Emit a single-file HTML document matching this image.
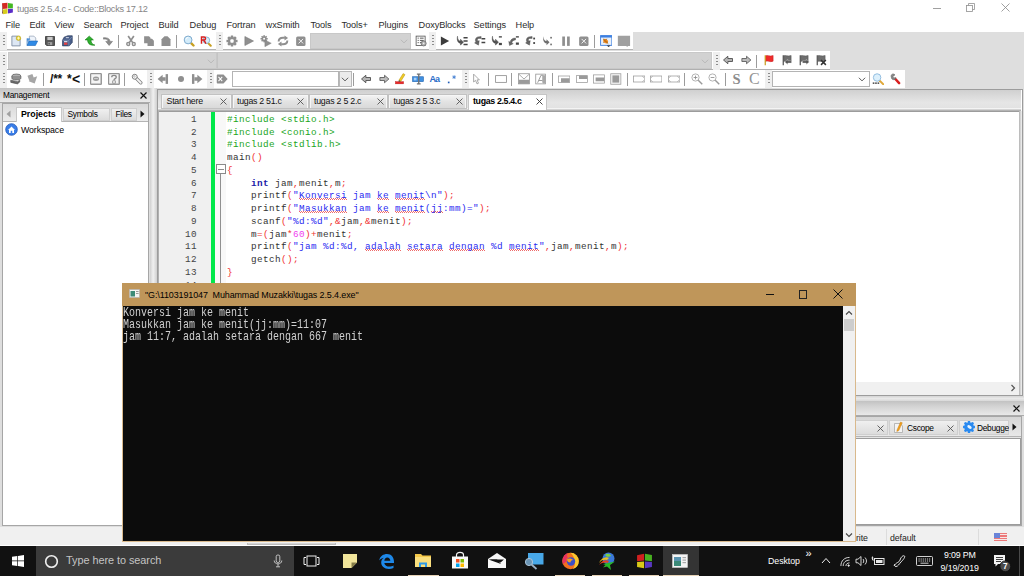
<!DOCTYPE html>
<html><head><meta charset="utf-8"><title>tugas 2.5.4.c - Code::Blocks 17.12</title>
<style>
*{box-sizing:border-box;margin:0;padding:0}
html,body{width:1024px;height:576px;overflow:hidden;background:#dedede;font-family:"Liberation Sans",sans-serif;font-size:9px;color:#000}
.a{position:absolute}
.t{position:absolute;white-space:nowrap;line-height:1}
#title{left:0;top:0;width:1024px;height:16px;background:#fff}
#menu{left:0;top:16px;width:1024px;height:16px;background:#fff}
#menu span{position:absolute;top:5px;font-size:9.2px;color:#2c2c2c;white-space:nowrap;line-height:1;letter-spacing:-0.1px}
.tb{position:absolute;background:#fff}
.gripbg{position:absolute;width:7px;height:18px;background:#efefef}
.grip{position:absolute;width:1.5px;height:12px;background:repeating-linear-gradient(#8c8c8c 0 1px,transparent 1px 3px)}
.sep{position:absolute;width:1px;height:13px;background:#9c9c9c}
.dcombo{position:absolute;background:#d2d2d2;border:1px solid #c8c8c8}
.combo{position:absolute;background:#fff;border:1px solid #b4b4b4}
.cbtn{position:absolute;background:#ececec;border:1px solid #b8b8b8}
.hdr{background:linear-gradient(#c2c2c2,#d4d4d4 40%,#e9e9e9)}
.tab{position:absolute;top:95px;height:13px;background:linear-gradient(#f2f2f2,#e2e2e2 50%,#d9d9d9);border:1px solid #f6f6f6;border-bottom:none;outline:1px solid #c2c2c2;font-size:8.8px;line-height:11px;white-space:nowrap;color:#111;letter-spacing:-0.32px}
.tab i{position:absolute;right:3px;top:2px;width:7px;height:7px}
.x7{position:absolute;width:7px;height:7px}
#code{left:227px;top:113.8px;font-family:"Liberation Mono",monospace;font-size:9.3px;letter-spacing:0.42px;line-height:12.75px;white-space:pre;color:#333}
#code .p{color:#1aa51a}
#code .k{color:#1a1aa8;font-weight:bold}
#code .o{color:#f03030}
#code .s{color:#2a2af0}
#code .n{color:#f040f0}
#code .w{background:repeating-linear-gradient(90deg,#ee6a6a 0 1px,transparent 1px 2px) 0 8px/100% 1px no-repeat,repeating-linear-gradient(90deg,transparent 0 1px,#ee6a6a 1px 2px) 0 9px/100% 1px no-repeat}
#ln{left:159px;top:113.8px;width:38px;text-align:right;font-family:"Liberation Mono",monospace;font-size:9.3px;letter-spacing:0.42px;line-height:12.75px;white-space:pre;color:#444}
#con{left:122px;top:283px;width:734px;height:259px;background:linear-gradient(#bf965a 0 23px,#d9b98c 23px)}
#conb{left:1px;top:23px;width:720px;height:235px;background:#0c0c0c;overflow:hidden}
#cont{left:0;top:1px;font-family:"Liberation Mono",monospace;font-size:10px;line-height:9.23px;color:#d0d0d0;white-space:pre;transform-origin:0 0;transform:scaleY(1.3);will-change:transform}
#task{left:0;top:546px;width:1024px;height:30px;background:#111}
.ul{position:absolute;top:28.5px;height:1.5px;background:#e8d4b8}
</style></head><body>
<div id="title" class="a">
<svg class="a" style="left:1px;top:1.5px" width="13" height="13" viewBox="0 0 16 16"><path d="M1.2 1.5L8 1V8L2 8.6Z" fill="#d42a22"/><path d="M1.2 1.5L2 8.6L2.6 14.6L1.6 14Z" fill="#5a1a14"/><path d="M8.6 1.2L14.6 2V7.6L8.6 8Z" fill="#44b822"/><path d="M2 9.2L8 8.6V14.2L2.6 15.2Z" fill="#d6cc1e"/><path d="M8.6 8.6L14.6 8.2V13L8.6 14Z" fill="#5a2cc8"/></svg>
<div class="t" style="left:17px;top:5px;font-size:9.2px;color:#868686;letter-spacing:-0.29px">tugas 2.5.4.c - Code::Blocks 17.12</div>
<div class="a" style="left:933px;top:8px;width:8px;height:1px;background:#a0a0a0"></div>
<svg class="a" style="left:966px;top:3px" width="9" height="9" viewBox="0 0 9 9" fill="none" stroke="#909090" stroke-width="0.8"><rect x="0.5" y="2.5" width="6" height="6"/><path d="M2.5 2.5V0.5H8.5V6.5H6.5"/></svg>
<svg class="a" style="left:1001px;top:3px" width="9" height="9" viewBox="0 0 9 9" stroke="#888" stroke-width="0.8"><path d="M0.5 0.5L8.5 8.5M8.5 0.5L0.5 8.5"/></svg>
</div>
<div id="menu" class="a">
<span style="left:5.6px">File</span>
<span style="left:29.6px">Edit</span>
<span style="left:54.6px">View</span>
<span style="left:83.6px">Search</span>
<span style="left:120.6px">Project</span>
<span style="left:158.6px">Build</span>
<span style="left:189.6px">Debug</span>
<span style="left:226.6px">Fortran</span>
<span style="left:265.6px">wxSmith</span>
<span style="left:310.6px">Tools</span>
<span style="left:341.6px">Tools+</span>
<span style="left:378.6px">Plugins</span>
<span style="left:418.6px">DoxyBlocks</span>
<span style="left:473.6px">Settings</span>
<span style="left:515.6px">Help</span>
</div>
<div class="a" style="left:0;top:32px;width:633px;height:18px;background:#fff;border-bottom:1px solid #b4b4b4"></div>
<div class="a" style="left:0;top:51px;width:830px;height:19px;background:#fff;border-bottom:1px solid #b0b0b0"></div>
<div class="a" style="left:0;top:70px;width:905px;height:18px;background:#fff;"></div>
<div class="gripbg" style="left:0px;top:32px"></div><div class="grip" style="left:3px;top:35px"></div>
<div class="gripbg" style="left:216px;top:32px"></div><div class="grip" style="left:219px;top:35px"></div>
<div class="gripbg" style="left:429px;top:32px"></div><div class="grip" style="left:432px;top:35px"></div>
<div class="gripbg" style="left:0px;top:52px"></div><div class="grip" style="left:3px;top:55px"></div>
<div class="gripbg" style="left:713px;top:52px"></div><div class="grip" style="left:716px;top:55px"></div>
<div class="gripbg" style="left:0px;top:70px"></div><div class="grip" style="left:3px;top:73px"></div>
<div class="gripbg" style="left:147px;top:70px"></div><div class="grip" style="left:150px;top:73px"></div>
<div class="gripbg" style="left:207px;top:70px"></div><div class="grip" style="left:210px;top:73px"></div>
<div class="gripbg" style="left:462px;top:70px"></div><div class="grip" style="left:465px;top:73px"></div>
<div class="gripbg" style="left:765px;top:70px"></div><div class="grip" style="left:768px;top:73px"></div>
<svg class="a" style="left:10px;top:35px" width="12" height="12" viewBox="0 0 16 16"><path d="M2.5 1.5H10L13.5 5V14.5H2.5Z" fill="#dde7f4" stroke="#76859c" stroke-width="1.1"/><circle cx="11.3" cy="4.2" r="3" fill="#ecd93a" stroke="#b49a10" stroke-width="0.8"/><path d="M11.3 2.4V6M9.5 4.2H13.1" stroke="#fffbd0" stroke-width="1.1"/></svg>
<svg class="a" style="left:26px;top:35px" width="12" height="12" viewBox="0 0 16 16"><path d="M4.5 1.5H10.5L13 4V9H4.5Z" fill="#eef3fa" stroke="#8a9ab0" stroke-width="0.9"/><path d="M1.5 4.5H5L6 6H3.5V13Z" fill="#2a7fd8"/><path d="M1.5 14L4.5 8H15.5L12.5 14Z" fill="#2f8ae6" stroke="#1a64b8" stroke-width="0.8"/><path d="M1.5 4.5V14" stroke="#1a64b8" stroke-width="1"/></svg>
<svg class="a" style="left:44px;top:35px" width="12" height="12" viewBox="0 0 16 16"><path d="M2 2H14V14H3.5L2 12.5Z" fill="#585858" stroke="#2e2e2e" stroke-width="1"/><rect x="4.5" y="2.5" width="7" height="4.2" fill="#c8c8c8"/><rect x="5" y="9.5" width="6" height="4" fill="#a0a0a0"/><rect x="6" y="10.5" width="1.6" height="2.2" fill="#444"/></svg>
<svg class="a" style="left:61px;top:35px" width="12" height="12" viewBox="0 0 16 16"><path d="M4 3L9 1H15V10L11 14.5H2V7Z" fill="#4a5f8a" stroke="#2d3c5e" stroke-width="0.9"/><path d="M2 7H10.5V14.5M10.5 7L15 2.5" stroke="#8fa3c8" stroke-width="0.8" fill="none"/><rect x="4" y="10" width="4.5" height="3" fill="#e84040"/><rect x="4" y="8" width="4.5" height="1.6" fill="#d8dce8"/><rect x="6.5" y="3" width="4" height="1.2" fill="#dfe4f0"/></svg>
<svg class="a" style="left:84px;top:35px" width="12" height="12" viewBox="0 0 16 16"><path d="M7 1.5L1.5 6.5H4.8C4.8 10.5 7 13.5 12 13.5H14.5C11 12.5 9.3 10.5 9.3 6.5H12.5Z" fill="#2fb02f" stroke="#148014" stroke-width="0.9" stroke-linejoin="round"/></svg>
<svg class="a" style="left:102px;top:35px" width="12" height="12" viewBox="0 0 16 16"><path d="M2 3.5C8 3.5 10.5 5 10.5 8.5H14L9.5 14L5 8.5H8C8 6 6 5 2 5.5Z" fill="#8a8a8a" stroke="#6a6a6a" stroke-width="0.7" stroke-linejoin="round"/></svg>
<svg class="a" style="left:125px;top:35px" width="12" height="12" viewBox="0 0 16 16"><path d="M4.2 1.2L10.5 10.5M11.8 1.2L5.5 10.5" stroke="#8f8f8f" stroke-width="2.3" fill="none"/><circle cx="4.3" cy="12" r="2" fill="none" stroke="#8f8f8f" stroke-width="1.8"/><circle cx="11.7" cy="12" r="2" fill="none" stroke="#8f8f8f" stroke-width="1.8"/></svg>
<svg class="a" style="left:143px;top:35px" width="12" height="12" viewBox="0 0 16 16"><path d="M1.5 1.5H8L10 3.5V5H12L14.5 7.5V14.5H6V11H1.5Z" fill="#8f8f8f"/></svg>
<svg class="a" style="left:160px;top:35px" width="12" height="12" viewBox="0 0 16 16"><path d="M2 14.5V5.5L6 1.5H10L14 5.5V14.5Z" fill="#8f8f8f"/></svg>
<svg class="a" style="left:183px;top:35px" width="12" height="12" viewBox="0 0 16 16"><path d="M10.5 10.5L14 14" stroke="#c8a020" stroke-width="3.2" stroke-linecap="round"/><circle cx="6.8" cy="6.6" r="5.2" fill="#d4ecfa" stroke="#7aa8cc" stroke-width="1.3"/><path d="M3.8 6A3.2 3.2 0 0 1 7 3.2" stroke="#fff" stroke-width="1.2" fill="none"/></svg>
<svg class="a" style="left:200px;top:35px" width="12" height="12" viewBox="0 0 16 16"><path d="M10.5 10.5L14.3 14.3" stroke="#c8a020" stroke-width="2.8" stroke-linecap="round"/><circle cx="8.5" cy="7" r="4.4" fill="#d8eefa" stroke="#7fb0d0" stroke-width="1.2"/><path d="M2 11.5V2.5H5.5C8 2.5 8 6.5 5.5 6.5H2M5 6.5L8 11.5" stroke="#d82020" stroke-width="2" fill="none"/></svg>
<svg class="a" style="left:226px;top:35px" width="12" height="12" viewBox="0 0 16 16"><g fill="#8f8f8f"><circle cx="8" cy="8" r="5.4"/><rect x="6.2" y="0.6" width="3.6" height="14.8" rx="0.6"/><rect x="0.6" y="6.2" width="14.8" height="3.6" rx="0.6"/><rect x="6.2" y="0.6" width="3.6" height="14.8" rx="0.6" transform="rotate(45 8 8)"/><rect x="6.2" y="0.6" width="3.6" height="14.8" rx="0.6" transform="rotate(-45 8 8)"/></g><rect x="5.8" y="5.8" width="4.4" height="4.4" rx="1.2" fill="#fff"/></svg>
<svg class="a" style="left:243px;top:35px" width="12" height="12" viewBox="0 0 16 16"><path d="M2.5 2L14 8L2.5 14Z" fill="#8f8f8f" stroke="#7a7a7a" stroke-width="0.8"/></svg>
<svg class="a" style="left:260px;top:35px" width="12" height="12" viewBox="0 0 16 16"><g fill="#8f8f8f"><circle cx="5.5" cy="5" r="3.4"/><rect x="4.5" y="0.2" width="2" height="9.6"/><rect x="0.7" y="4" width="9.6" height="2"/><rect x="4.5" y="0.2" width="2" height="9.6" transform="rotate(45 5.5 5)"/><rect x="4.5" y="0.2" width="2" height="9.6" transform="rotate(-45 5.5 5)"/></g><circle cx="5.5" cy="5" r="1.3" fill="#fff"/><path d="M6.5 6.5L15 11L6.5 15.5Z" fill="#8f8f8f" stroke="#808080" stroke-width="0.6"/></svg>
<svg class="a" style="left:277px;top:35px" width="12" height="12" viewBox="0 0 16 16"><path d="M2.2 8.6C2.2 5 4.5 3.6 8 3.6H10.5" fill="none" stroke="#8f8f8f" stroke-width="2.6"/><path d="M10 0.8L14.8 4L10 7.2Z" fill="#8f8f8f"/><path d="M13.8 7.4C13.8 11 11.5 12.4 8 12.4H5.5" fill="none" stroke="#8f8f8f" stroke-width="2.6"/><path d="M6 8.8L1.2 12L6 15.2Z" fill="#8f8f8f"/></svg>
<svg class="a" style="left:295px;top:35px" width="12" height="12" viewBox="0 0 16 16"><rect x="1.5" y="2" width="12.5" height="12.5" rx="2" fill="#8f8f8f"/><path d="M4.8 5.2L10.8 11.2M10.8 5.2L4.8 11.2" stroke="#f4f4f4" stroke-width="1.3"/></svg>
<svg class="a" style="left:415px;top:35px" width="12" height="12" viewBox="0 0 16 16"><rect x="1.5" y="1.5" width="12" height="12.5" fill="#fff" stroke="#555" stroke-width="1.1"/><path d="M3.5 4.2H5M6.5 4.2H11.5M3.5 7.2H5M6.5 7.2H11.5M3.5 10.2H5M6.5 10.2H9" stroke="#444" stroke-width="1.2"/><circle cx="11.5" cy="11.2" r="3.4" fill="#b0b0b0" stroke="#6a6a6a" stroke-width="1"/><circle cx="11.5" cy="11.2" r="1.1" fill="#f0f0f0"/></svg>
<svg class="a" style="left:439px;top:35px" width="12" height="12" viewBox="0 0 16 16"><path d="M2.5 2L13.5 8L2.5 14Z" fill="#3c3c3c"/></svg>
<svg class="a" style="left:456px;top:35px" width="12" height="12" viewBox="0 0 16 16"><path d="M2 1.5C2 6 3.5 7.5 6 8V5.5L10 9.5L6 13.5V11C2.5 10.5 0.8 7 2 1.5Z" fill="#555" stroke="#333" stroke-width="0.5"/><path d="M10 3.5H15.5M10 8H15.5M10 12.5H15.5" stroke="#444" stroke-width="2"/></svg>
<svg class="a" style="left:474px;top:35px" width="12" height="12" viewBox="0 0 16 16"><path d="M9.5 2L5 2.5C2 3.5 1 6.5 2.5 9L0.8 10.5L6 13.5L7 7.5L5 8C4 6.5 4.5 5 6 4.5L9.5 4.5Z" fill="#666" stroke="#444" stroke-width="0.5"/><path d="M10 5H15M10 10H15" stroke="#444" stroke-width="2"/></svg>
<svg class="a" style="left:491px;top:35px" width="12" height="12" viewBox="0 0 16 16"><path d="M2 1.5C2 6 3.5 7.5 6 8V5.5L10 9.5L6 13.5V11C2.5 10.5 0.8 7 2 1.5Z" fill="#555" stroke="#333" stroke-width="0.5"/><path d="M10.5 2.5H14.5" stroke="#444" stroke-width="1.8"/><rect x="10.5" y="10.5" width="4" height="3" fill="#444"/></svg>
<svg class="a" style="left:508px;top:35px" width="12" height="12" viewBox="0 0 16 16"><path d="M10 4C6 4 3.5 6 2.8 9.5L1 8.5L2 14L7 11.5L5 10.5C5.5 8 7 6.8 10 6.5Z" fill="#666" stroke="#444" stroke-width="0.5"/><path d="M10.5 2.5H14.5" stroke="#444" stroke-width="1.8"/><rect x="10.5" y="10" width="4" height="3" fill="#444"/></svg>
<svg class="a" style="left:525px;top:35px" width="12" height="12" viewBox="0 0 16 16"><path d="M9.5 2L5 2.5C2 3.5 1 6.5 2.5 9L0.8 10.5L6 13.5L7 7.5L5 8C4 6.5 4.5 5 6 4.5L9.5 4.5Z" fill="#666" stroke="#444" stroke-width="0.5"/><rect x="11" y="3.5" width="2.4" height="2.4" fill="#444"/><rect x="11" y="9.5" width="2.4" height="2.4" fill="#444"/></svg>
<svg class="a" style="left:542px;top:35px" width="12" height="12" viewBox="0 0 16 16"><path d="M2 1.5C2 6 3.5 7.5 6 8V5.5L10 9.5L6 13.5V11C2.5 10.5 0.8 7 2 1.5Z" fill="#707070"/><rect x="11" y="2.5" width="2.2" height="2.2" fill="#707070"/><rect x="11" y="11.5" width="2.2" height="2.2" fill="#707070"/></svg>
<svg class="a" style="left:560px;top:35px" width="12" height="12" viewBox="0 0 16 16"><rect x="3" y="2" width="3.6" height="12.5" fill="#8f8f8f"/><rect x="9.4" y="2" width="3.6" height="12.5" fill="#8f8f8f"/></svg>
<svg class="a" style="left:578px;top:35px" width="12" height="12" viewBox="0 0 16 16"><rect x="1.5" y="2" width="12.5" height="12.5" rx="2" fill="#8f8f8f"/><path d="M4.8 5.2L10.8 11.2M10.8 5.2L4.8 11.2" stroke="#f4f4f4" stroke-width="1.3"/></svg>
<svg class="a" style="left:600px;top:35px" width="12" height="12" viewBox="0 0 16 16"><rect x="0.8" y="0.8" width="15" height="13" fill="#e8f0fb" stroke="#3c7fe0" stroke-width="1.2"/><rect x="0.8" y="0.8" width="15" height="2.6" fill="#3c7fe0"/><ellipse cx="7.5" cy="8.2" rx="3.6" ry="2.7" fill="#f08a1c" transform="rotate(35 7.5 8.2)"/><path d="M4 5L11 11.5M4.5 10.5L6 9M9 5L8 6.5" stroke="#7a4a10" stroke-width="0.9"/><path d="M9 14H14L11.5 16Z" fill="#222"/></svg>
<svg class="a" style="left:617px;top:34.5px" width="13.5" height="13.5" viewBox="0 0 16 16"><path d="M1 1H15.5V13H13L12 14.2L11 13H1Z" fill="#a0a0a0"/></svg>
<div class="sep" style="left:78px;top:35px"></div>
<div class="sep" style="left:118px;top:35px"></div>
<div class="sep" style="left:176px;top:35px"></div>
<div class="sep" style="left:594px;top:35px"></div>
<div class="dcombo" style="left:310px;top:33px;width:101px;height:16px"></div>
<svg class="a" style="left:399px;top:36px" width="10" height="10" viewBox="0 0 16 16"><path d="M3 6L8 11L13 6" stroke="#b4b4b4" stroke-width="1.4" fill="none"/></svg>
<div class="dcombo" style="left:8px;top:52px;width:209px;height:17px"></div>
<div class="dcombo" style="left:217px;top:52px;width:495px;height:17px;border-left:1px solid #c4c4c4"></div>
<svg class="a" style="left:206px;top:56px" width="10" height="10" viewBox="0 0 16 16"><path d="M3 6L8 11L13 6" stroke="#b4b4b4" stroke-width="1.4" fill="none"/></svg>
<svg class="a" style="left:700px;top:56px" width="10" height="10" viewBox="0 0 16 16"><path d="M3 6L8 11L13 6" stroke="#b4b4b4" stroke-width="1.4" fill="none"/></svg>
<svg class="a" style="left:722px;top:54px" width="12" height="12" viewBox="0 0 16 16"><path d="M2 8L7.8 3V6H14V10H7.8V13Z" fill="#b4b4b4" stroke="#444" stroke-width="1.1" stroke-linejoin="round"/></svg>
<svg class="a" style="left:740px;top:54px" width="12" height="12" viewBox="0 0 16 16"><path d="M14.5 8L8.7 3V6H2.5V10H8.7V13Z" fill="#bcbcbc" stroke="#555" stroke-width="1.1" stroke-linejoin="round"/></svg>
<svg class="a" style="left:763px;top:54px" width="12" height="12" viewBox="0 0 16 16"><path d="M3.5 2.5C6 0.8 9 3.8 13.5 2V9.5C9 11.5 6 8.3 3.5 10Z" fill="#ee2c2c" stroke="#c01818" stroke-width="0.6"/><path d="M3 1.5V15" stroke="#c89a18" stroke-width="1.6"/></svg>
<svg class="a" style="left:781px;top:54px" width="12" height="12" viewBox="0 0 16 16"><path d="M3 1.5V15" stroke="#505050" stroke-width="1.6"/><path d="M3.5 2.5C6 1 9 3.5 13.5 2V9.5C9 11.2 6 8.5 3.5 10Z" fill="#6e6e6e" stroke="#484848" stroke-width="0.6"/><path d="M5 10.5L9 7V9H14V12H9V14Z" fill="#555" stroke="#e8e8e8" stroke-width="0.5"/></svg>
<svg class="a" style="left:798px;top:54px" width="12" height="12" viewBox="0 0 16 16"><path d="M3 1.5V15" stroke="#505050" stroke-width="1.6"/><path d="M3.5 2.5C6 1 9 3.5 13.5 2V9.5C9 11.2 6 8.5 3.5 10Z" fill="#6e6e6e" stroke="#484848" stroke-width="0.6"/><path d="M15 10.5L11 7V9H6V12H11V14Z" fill="#555" stroke="#e8e8e8" stroke-width="0.5"/></svg>
<svg class="a" style="left:815px;top:54px" width="12" height="12" viewBox="0 0 16 16"><path d="M3 1.5V15" stroke="#505050" stroke-width="1.6"/><path d="M3.5 2.5C6 1 9 3.5 13.5 2V9.5C9 11.2 6 8.5 3.5 10Z" fill="#6e6e6e" stroke="#484848" stroke-width="0.6"/><path d="M8 8L14.5 14.5M14.5 8L8 14.5" stroke="#333" stroke-width="2"/></svg>
<div class="sep" style="left:756px;top:55px"></div>
<svg class="a" style="left:10px;top:73px" width="12" height="12" viewBox="0 0 16 16"><ellipse cx="8.5" cy="4" rx="6" ry="2.6" fill="#b0b0b0" stroke="#5e5e5e" stroke-width="1"/><path d="M2.5 4V7C2.5 10 14.5 10 14.5 7V4" fill="#909090" stroke="#5e5e5e" stroke-width="1"/><path d="M1 9.5L10 11.5L13 9.5V12L10 14.5L1 12.5Z" fill="#6a6a6a" stroke="#4a4a4a" stroke-width="0.8"/></svg>
<svg class="a" style="left:27px;top:73px" width="12" height="12" viewBox="0 0 16 16"><path d="M2.5 1.5H9.5V6.5H14.5L8 14.5L1.5 9H2.5Z" fill="#a6a6a6" transform="rotate(-20 8 8)"/></svg>
<svg class="a" style="left:90px;top:73px" width="12" height="12" viewBox="0 0 16 16"><rect x="1" y="1" width="14" height="14" fill="#f4f4f4" stroke="#555" stroke-width="1"/><path d="M14.5 1.5V14.5H1.5" stroke="#aaa" stroke-width="1" fill="none"/><ellipse cx="8" cy="7.5" rx="4" ry="3" fill="#9a9a9a"/><path d="M5.5 7.5H10.5" stroke="#eee" stroke-width="1"/></svg>
<svg class="a" style="left:108px;top:73px" width="12" height="12" viewBox="0 0 16 16"><rect x="1" y="1" width="14" height="14" fill="#f4f4f4" stroke="#555" stroke-width="1"/><path d="M14.5 1.5V14.5H1.5" stroke="#aaa" stroke-width="1" fill="none"/><path d="M5 5.5C5 2.5 11 2.5 11 5.5C11 7.5 8 7.5 8 9.5" stroke="#8a8a8a" stroke-width="1.8" fill="none"/><rect x="6.3" y="10.5" width="3.4" height="3" fill="#fff" stroke="#777" stroke-width="0.9"/></svg>
<svg class="a" style="left:131px;top:73px" width="12" height="12" viewBox="0 0 16 16"><path d="M6.5 6.5L13 13" stroke="#808080" stroke-width="4.6" stroke-linecap="round"/><path d="M6.5 6.5L13 13" stroke="#f6f6f6" stroke-width="2.4" stroke-linecap="round"/><circle cx="5" cy="5" r="3.3" fill="#f6f6f6" stroke="#808080" stroke-width="1.3"/><circle cx="4.6" cy="4.6" r="1" fill="#fff" stroke="#909090" stroke-width="0.7"/></svg>
<svg class="a" style="left:157px;top:73px" width="12" height="12" viewBox="0 0 16 16"><path d="M0.8 8L7.5 2.2V5.8H11.5V10.2H7.5V13.8Z" fill="#8f8f8f"/><rect x="11.5" y="1.5" width="3.2" height="13" fill="#8f8f8f"/></svg>
<svg class="a" style="left:175px;top:73px" width="12" height="12" viewBox="0 0 16 16"><circle cx="8" cy="8" r="4" fill="#8f8f8f"/></svg>
<svg class="a" style="left:191px;top:73px" width="12" height="12" viewBox="0 0 16 16"><path d="M15.2 8L8.5 2.2V5.8H4.5V10.2H8.5V13.8Z" fill="#8f8f8f"/><rect x="1.3" y="1.5" width="3.2" height="13" fill="#8f8f8f"/></svg>
<svg class="a" style="left:216px;top:73px" width="12" height="12" viewBox="0 0 16 16"><path d="M1 3.5C1 2.5 1.5 2 2.5 2H10L15.5 8L10 14H2.5C1.5 14 1 13.5 1 12.5Z" fill="#8f8f8f"/><path d="M3.3 5.3L8.3 10.7M8.3 5.3L3.3 10.7" stroke="#fff" stroke-width="1.4"/></svg>
<svg class="a" style="left:360px;top:73px" width="12" height="12" viewBox="0 0 16 16"><path d="M2 8L7.8 3V6H14V10H7.8V13Z" fill="#b4b4b4" stroke="#444" stroke-width="1.1" stroke-linejoin="round"/></svg>
<svg class="a" style="left:378px;top:73px" width="12" height="12" viewBox="0 0 16 16"><path d="M14.5 8L8.7 3V6H2.5V10H8.7V13Z" fill="#bcbcbc" stroke="#555" stroke-width="1.1" stroke-linejoin="round"/></svg>
<svg class="a" style="left:395px;top:73px" width="12" height="12" viewBox="0 0 16 16"><rect x="0.5" y="11.5" width="11" height="3" fill="#e82828" stroke="#b81818" stroke-width="0.5"/><path d="M5.2 9.8L10.8 0.8L13.3 2.2L7.8 11Z" fill="#f0cc28" stroke="#b89410" stroke-width="0.7"/><path d="M5.2 9.8L4.8 11.5L7.8 11Z" fill="#333"/></svg>
<svg class="a" style="left:412px;top:73px" width="12" height="12" viewBox="0 0 16 16"><rect x="0.8" y="5" width="14.4" height="6.5" fill="#3f8fe0" stroke="#1d62b0" stroke-width="0.8"/><rect x="2.5" y="6.3" width="3.5" height="3.5" fill="#a8d0f8"/><path d="M6.5 1.5H11.5M6.5 14.5H11.5M9 1.5V14.5" stroke="#707070" stroke-width="1.8"/></svg>
<svg class="a" style="left:429px;top:73px" width="12" height="12" viewBox="0 0 16 16"><text x="0.5" y="12.5" font-family="Liberation Sans" font-weight="bold" font-size="12" fill="#2a6cc8" letter-spacing="-1">Aa</text></svg>
<svg class="a" style="left:446px;top:73px" width="12" height="12" viewBox="0 0 16 16"><rect x="2.5" y="11.5" width="2.2" height="2.2" fill="#1e5cb8"/><path d="M10.8 3V8M8.6 4.2L13 6.8M13 4.2L8.6 6.8" stroke="#3a78d0" stroke-width="1.1"/></svg>
<svg class="a" style="left:471px;top:73px" width="12" height="12" viewBox="0 0 16 16"><path d="M3.5 1.5V12L6 9.8L8 14.5L10 13.6L8 9.2H11.2Z" fill="#fff" stroke="#8f8f8f" stroke-width="1"/></svg>
<svg class="a" style="left:495px;top:73px" width="12" height="12" viewBox="0 0 16 16"><rect x="0.8" y="3.5" width="14.4" height="9" fill="#fff" stroke="#8f8f8f" stroke-width="1.1"/></svg>
<svg class="a" style="left:518px;top:73px" width="12" height="12" viewBox="0 0 16 16"><rect x="0.8" y="1" width="14.4" height="13.5" fill="#fff" stroke="#8f8f8f" stroke-width="1"/><path d="M1 1.5L8 8L15 1.5" stroke="#8f8f8f" stroke-width="1" fill="none"/><rect x="1" y="9" width="14" height="5.5" fill="#9a9a9a"/></svg>
<svg class="a" style="left:535px;top:73px" width="12" height="12" viewBox="0 0 16 16"><rect x="1" y="1.5" width="13" height="13" fill="#fff" stroke="#8f8f8f" stroke-width="1"/><path d="M3.5 13L8 3H10.5V13M5 10H10" stroke="#9a9a9a" stroke-width="1.3" fill="none"/><rect x="10.5" y="3" width="3.5" height="11" fill="#a8a8a8"/></svg>
<svg class="a" style="left:558px;top:73px" width="12" height="12" viewBox="0 0 16 16"><rect x="0.8" y="4" width="15" height="8.5" fill="#fff" stroke="#9a9a9a" stroke-width="1"/><rect x="4" y="7" width="11.5" height="5.5" fill="#9a9a9a"/></svg>
<svg class="a" style="left:576px;top:73px" width="12" height="12" viewBox="0 0 16 16"><rect x="0.8" y="3.5" width="14.4" height="9" fill="#fff" stroke="#9a9a9a" stroke-width="1"/><rect x="4" y="3.5" width="11" height="4.5" fill="#9a9a9a"/></svg>
<svg class="a" style="left:593px;top:73px" width="12" height="12" viewBox="0 0 16 16"><rect x="0.8" y="2.5" width="14.4" height="11" fill="#fff" stroke="#9a9a9a" stroke-width="1"/><rect x="3.5" y="6" width="11.5" height="5" fill="#9a9a9a"/></svg>
<svg class="a" style="left:610px;top:73px" width="12" height="12" viewBox="0 0 16 16"><rect x="1" y="1" width="13.5" height="14" fill="#f4f4f4" stroke="#9a9a9a" stroke-width="1"/><rect x="3.2" y="3.2" width="9" height="9.6" fill="#9a9a9a"/></svg>
<svg class="a" style="left:633px;top:73px" width="12" height="12" viewBox="0 0 16 16"><rect x="0.8" y="4" width="15" height="8" fill="#fff" stroke="#9a9a9a" stroke-width="1"/><path d="M12.5 4.5L15 6.5M12.5 11.5L15 9.5" stroke="#9a9a9a" stroke-width="0.9"/></svg>
<svg class="a" style="left:650px;top:73px" width="12" height="12" viewBox="0 0 16 16"><rect x="0.8" y="4" width="15" height="8" fill="#fff" stroke="#9a9a9a" stroke-width="1"/><path d="M3.5 4.5L1 6.5M3.5 11.5L1 9.5" stroke="#9a9a9a" stroke-width="0.9"/></svg>
<svg class="a" style="left:668px;top:73px" width="12" height="12" viewBox="0 0 16 16"><rect x="0.8" y="4" width="15" height="8" fill="#fff" stroke="#9a9a9a" stroke-width="1"/><path d="M12.5 4.5L15 6.5M12.5 11.5L15 9.5M3.5 4.5L1 6.5M3.5 11.5L1 9.5" stroke="#9a9a9a" stroke-width="0.9"/></svg>
<svg class="a" style="left:691px;top:73px" width="12" height="12" viewBox="0 0 16 16"><path d="M9 9L15 15" stroke="#9a9a9a" stroke-width="1.8"/><circle cx="6" cy="6" r="4.8" fill="#fff" stroke="#9a9a9a" stroke-width="1"/><path d="M3.5 6H8.5M6 3.5V8.5" stroke="#8a8a8a" stroke-width="1.1"/></svg>
<svg class="a" style="left:708px;top:73px" width="12" height="12" viewBox="0 0 16 16"><path d="M9 9L15 15" stroke="#9a9a9a" stroke-width="1.8"/><circle cx="6" cy="6" r="4.8" fill="#fff" stroke="#9a9a9a" stroke-width="1"/><path d="M3.5 6H8.5" stroke="#8a8a8a" stroke-width="1.1"/></svg>
<svg class="a" style="left:872px;top:73px" width="12" height="12" viewBox="0 0 16 16"><path d="M10 10L15 15" stroke="#e0a838" stroke-width="2.4" stroke-linecap="round"/><circle cx="6.8" cy="6" r="5" fill="#dcf0fc" stroke="#8ab8dc" stroke-width="1.2"/><path d="M1 13.5H10.5" stroke="#222" stroke-width="1.6" stroke-dasharray="2.2 1"/></svg>
<svg class="a" style="left:889px;top:73px" width="12" height="12" viewBox="0 0 16 16"><path d="M8.5 8L13.5 13.5" stroke="#d82020" stroke-width="3.4" stroke-linecap="round"/><path d="M3 6C1.5 3 4 0.5 7 2L5 4.5L6.5 6.5L9.5 5C10 8 7.5 9.5 5 8.5Z" fill="#8a8a8a" stroke="#606060" stroke-width="0.7" transform="rotate(20 6 5)"/></svg>
<div class="sep" style="left:43px;top:73px"></div>
<div class="sep" style="left:84px;top:73px"></div>
<div class="sep" style="left:124px;top:73px"></div>
<div class="sep" style="left:353px;top:73px"></div>
<div class="sep" style="left:488px;top:73px"></div>
<div class="sep" style="left:511px;top:73px"></div>
<div class="sep" style="left:552px;top:73px"></div>
<div class="sep" style="left:627px;top:73px"></div>
<div class="sep" style="left:684px;top:73px"></div>
<div class="sep" style="left:725px;top:73px"></div>
<div class="t" style="left:50px;top:72.5px;font-size:12px;font-weight:bold;letter-spacing:-0.2px;color:#111">/**</div>
<div class="t" style="left:67px;top:72.5px;font-size:12px;font-weight:bold;color:#111">*</div><div class="t" style="left:72px;top:72px;font-size:14px;font-weight:bold;color:#111">&lt;</div>
<div class="t" style="left:732.5px;top:72px;font-family:'Liberation Serif',serif;font-size:14.5px;font-weight:bold;color:#8c8c8c">S</div>
<div class="t" style="left:749px;top:71px;font-family:'Liberation Serif',serif;font-size:16px;color:#949494">C</div>
<div class="combo" style="left:232px;top:71px;width:107px;height:16px"></div>
<div class="cbtn" style="left:339px;top:71px;width:13px;height:16px"></div>
<svg class="a" style="left:340px;top:74px" width="10" height="10" viewBox="0 0 16 16"><path d="M3 6L8 11L13 6" stroke="#444" stroke-width="1.4" fill="none"/></svg>
<div class="combo" style="left:772px;top:71px;width:98px;height:16px"></div>
<svg class="a" style="left:857px;top:74px" width="10" height="10" viewBox="0 0 16 16"><path d="M3 6L8 11L13 6" stroke="#444" stroke-width="1.4" fill="none"/></svg>
<!-- management -->
<div class="a hdr" style="left:0;top:88px;width:150px;height:15px;border-bottom:1px solid #ababab"></div>
<div class="t" style="left:3px;top:91px;font-size:8.3px;letter-spacing:-0.22px">Management</div>
<svg class="a" style="left:140px;top:92px" width="7" height="7" viewBox="0 0 7 7" stroke="#111" stroke-width="1.2"><path d="M0.5 0.5L6.5 6.5M6.5 0.5L0.5 6.5"/></svg>
<div class="a" style="left:2px;top:103px;width:147px;height:423px;background:#fff;border:1px solid #a6a6a6"></div>
<div class="a" style="left:3px;top:104px;width:145px;height:18px;background:linear-gradient(#d9d9d9,#ececec);border-bottom:1px solid #b4b4b4"></div>
<div class="a" style="left:16px;top:107px;width:46px;height:15px;background:#fff;border:1px solid #c8c8c8;border-bottom:none"></div>
<div class="a" style="left:63px;top:108px;width:47px;height:13px;background:linear-gradient(#f0f0f0,#dcdcdc);border:1px solid #cfcfcf"></div>
<div class="a" style="left:111px;top:108px;width:26px;height:13px;background:linear-gradient(#f0f0f0,#dcdcdc);border:1px solid #cfcfcf"></div>
<div class="t" style="left:21px;top:110px;font-size:8.8px;font-weight:bold;letter-spacing:0px">Projects</div>
<div class="t" style="left:67.5px;top:110px;font-size:8.4px;letter-spacing:-0.3px">Symbols</div>
<div class="t" style="left:115.5px;top:110px;font-size:8.4px;letter-spacing:-0.3px">Files</div>
<svg class="a" style="left:6px;top:110px" width="5" height="8" viewBox="0 0 5 8"><path d="M4.5 0.5V7.5L0.5 4Z" fill="#a0a0a0"/></svg>
<svg class="a" style="left:140px;top:110px" width="5" height="8" viewBox="0 0 5 8"><path d="M0.5 0.5V7.5L4.5 4Z" fill="#111"/></svg>
<svg class="a" style="left:5px;top:123px" width="13" height="13" viewBox="0 0 13 13"><circle cx="6.5" cy="6.5" r="5.8" fill="#3a7ee8" stroke="#1c54b8" stroke-width="0.8"/><path d="M3 7L6.5 3.5L10 7H9V10H7.3V7.8H5.7V10H4V7Z" fill="#fff"/></svg>
<div class="t" style="left:21px;top:125.8px;font-size:8.8px;letter-spacing:-0.1px">Workspace</div>
<!-- sash -->
<div class="a" style="left:150px;top:88px;width:7px;height:440px;background:linear-gradient(90deg,#d0d0d0,#f0f0f0 45%,#cfcfcf)"></div>

<!-- editor notebook -->
<div class="a" style="left:157px;top:89px;width:866px;height:307px;background:#fff;border:1px solid #9c9c9c"></div>
<div class="a" style="left:158px;top:90px;width:863px;height:21px;background:linear-gradient(#d0d0d0,#e6e6e6 60%,#e0e0e0)"></div>
<div class="a" style="left:158px;top:108px;width:863px;height:4px;background:linear-gradient(#f4f4f4 0 1px,#d4d4d4 1px 2px,#b4b4b4 2px 3px,#9c9c9c 3px)"></div>
<div class="tab" style="left:162px;width:69px;padding-left:3.5px;letter-spacing:-0.22px">Start here</div>
<div class="tab" style="left:233px;width:75px;padding-left:3px;letter-spacing:-0.28px">tugas 2 51.c</div>
<div class="tab" style="left:310px;width:77px;padding-left:3px;letter-spacing:-0.24px">tugas 2 5 2.c</div>
<div class="tab" style="left:389px;width:77px;padding-left:3.5px;letter-spacing:-0.28px">tugas 2 5 3.c</div>
<div class="a" style="left:468px;top:94px;width:79px;height:16px;background:#fff;border:1px solid #c6c6c6;border-bottom:none"></div>
<div class="t" style="left:473px;top:97px;font-size:8.8px;font-weight:bold;letter-spacing:-0.33px">tugas 2.5.4.c</div>
<svg class="x7" style="left:220px;top:98px" viewBox="0 0 7 7" stroke="#555" stroke-width="0.9"><path d="M0.5 0.5L6.5 6.5M6.5 0.5L0.5 6.5"/></svg>
<svg class="x7" style="left:297px;top:98px" viewBox="0 0 7 7" stroke="#555" stroke-width="0.9"><path d="M0.5 0.5L6.5 6.5M6.5 0.5L0.5 6.5"/></svg>
<svg class="x7" style="left:377px;top:98px" viewBox="0 0 7 7" stroke="#555" stroke-width="0.9"><path d="M0.5 0.5L6.5 6.5M6.5 0.5L0.5 6.5"/></svg>
<svg class="x7" style="left:456px;top:98px" viewBox="0 0 7 7" stroke="#555" stroke-width="0.9"><path d="M0.5 0.5L6.5 6.5M6.5 0.5L0.5 6.5"/></svg>
<svg class="x7" style="left:536px;top:98px" viewBox="0 0 7 7" stroke="#333" stroke-width="0.9"><path d="M0.5 0.5L6.5 6.5M6.5 0.5L0.5 6.5"/></svg>

<div class="a" style="left:158px;top:111px;width:1px;height:284px;background:#b0b0b0"></div>
<div class="a" style="left:159px;top:112px;width:52px;height:270px;background:#f0f0f0"></div>
<div class="a" style="left:214px;top:112px;width:12px;height:270px;background:#f8f8f8"></div>
<div class="a" style="left:211px;top:112px;width:3.8px;height:172px;background:#00e84a"></div>
<div class="a" style="left:159px;top:382px;width:860px;height:13px;background:#f0f0f0"></div>
<div class="a" style="left:1019px;top:111px;width:3px;height:284px;background:linear-gradient(90deg,#b0b0b0,#dcdcdc 60%,#f4f4f4)"></div>
<svg class="a" style="left:1009px;top:384px" width="8" height="8" viewBox="0 0 8 8"><path d="M2.5 1L5.5 4L2.5 7" stroke="#555" stroke-width="1.2" fill="none"/></svg>
<!-- fold marker -->
<div class="a" style="left:216px;top:164.3px;width:9.7px;height:9.5px;background:#fff;border:1px solid #8a8a8a"></div>
<div class="a" style="left:218px;top:168.6px;width:6px;height:1px;background:#8c8c8c"></div>
<div class="a" style="left:220px;top:174px;width:1px;height:110px;background:#909090"></div>
<div id="ln" class="a">1
2
3
4
5
6
7
8
9
10
11
12
13
14</div>
<div id="code" class="a"><span class="p">#include &lt;stdio.h&gt;</span>
<span class="p">#include &lt;conio.h&gt;</span>
<span class="p">#include &lt;stdlib.h&gt;</span>
main<span class="o">()</span>
<span class="o">{</span>
    <span class="k">int</span> jam<span class="o">,</span>menit<span class="o">,</span>m<span class="o">;</span>
    printf<span class="o">(</span><span class="s">"<span class="w">Konversi</span> jam <span class="w">ke</span> <span class="w">menit</span>\n"</span><span class="o">);</span>
    printf<span class="o">(</span><span class="s">"<span class="w">Masukkan</span> jam <span class="w">ke</span> <span class="w">menit</span>(<span class="w">jj</span>:mm)="</span><span class="o">);</span>
    scanf<span class="o">(</span><span class="s">"%d:%d"</span><span class="o">,&amp;</span>jam<span class="o">,&amp;</span>menit<span class="o">);</span>
    m<span class="o">=(</span>jam<span class="o">*</span><span class="n">60</span><span class="o">)+</span>menit<span class="o">;</span>
    printf<span class="o">(</span><span class="s">"jam %d:%d, <span class="w">adalah</span> <span class="w">setara</span> <span class="w">dengan</span> %d <span class="w">menit</span>"</span><span class="o">,</span>jam<span class="o">,</span>menit<span class="o">,</span>m<span class="o">);</span>
    getch<span class="o">();</span>
<span class="o">}</span></div>

<!-- logs panel -->
<div class="a" style="left:856px;top:396px;width:168px;height:5px;background:linear-gradient(#d4d4d4,#e8e8e8 50%,#d8d8d8)"></div>
<div class="a hdr" style="left:856px;top:401px;width:168px;height:15px;border-bottom:1px solid #ababab"></div>
<svg class="a" style="left:1013px;top:405px" width="7" height="7" viewBox="0 0 7 7" stroke="#111" stroke-width="1.2"><path d="M0.5 0.5L6.5 6.5M6.5 0.5L0.5 6.5"/></svg>
<div class="a" style="left:856px;top:416px;width:166px;height:110px;background:linear-gradient(#d6d6d6,#e8e8e8 19px,#b4b4b4 19px,#b4b4b4 20px,#e4e4e4 20px);border:1px solid #a6a6a6;border-left:none"></div>
<div class="a" style="left:856px;top:420px;width:32px;height:15px;background:linear-gradient(#f0f0f0,#dcdcdc);border:1px solid #cfcfcf;border-left:none"></div>
<div class="a" style="left:889px;top:420px;width:69px;height:15px;background:linear-gradient(#f0f0f0,#dcdcdc);border:1px solid #cfcfcf"></div>
<div class="a" style="left:959px;top:420px;width:50px;height:15px;background:linear-gradient(#f0f0f0,#dcdcdc);border:1px solid #cfcfcf"></div>
<svg class="x7" style="left:877px;top:424.5px" viewBox="0 0 7 7" stroke="#555" stroke-width="0.9"><path d="M0.5 0.5L6.5 6.5M6.5 0.5L0.5 6.5"/></svg>
<svg class="x7" style="left:947px;top:424.5px" viewBox="0 0 7 7" stroke="#555" stroke-width="0.9"><path d="M0.5 0.5L6.5 6.5M6.5 0.5L0.5 6.5"/></svg>
<svg class="a" style="left:893px;top:421px" width="11" height="12" viewBox="0 0 11 12"><path d="M1.5 2.5H7L9.5 5V11.5H1.5Z" fill="#f4f4f4" stroke="#aaa" stroke-width="0.8"/><path d="M4 9L7.5 1L9.3 1.8L5.8 9.6L3.8 10.5Z" fill="#f0a020" stroke="#c07810" stroke-width="0.4"/></svg>
<div class="t" style="left:907px;top:423.6px;font-size:8.4px;letter-spacing:-0.3px">Cscope</div>
<svg class="a" style="left:963px;top:421px" width="12" height="12" viewBox="0 0 12 12"><circle cx="6" cy="6" r="4.6" fill="#2a8af0"/><g stroke="#2a8af0" stroke-width="2.8" stroke-linecap="round"><path d="M6 1.2V10.8M1.2 6H10.8M2.6 2.6L9.4 9.4M9.4 2.6L2.6 9.4"/></g><ellipse cx="6.5" cy="6" rx="2.4" ry="1.5" fill="#e8f4ff" transform="rotate(30 6.5 6)"/></svg>
<div class="a" style="left:977px;top:420px;width:32px;height:15px;overflow:hidden"><div class="t" style="left:0;top:3.6px;font-size:8.4px;letter-spacing:-0.3px">Debugger</div></div>
<svg class="a" style="left:1012px;top:423px" width="5" height="8" viewBox="0 0 5 8"><path d="M0.5 0.5V7.5L4.5 4Z" fill="#111"/></svg>
<div class="a" style="left:856px;top:438px;width:165px;height:87px;background:#fff;border:1px solid #9c9c9c;border-left:none"></div>

<!-- status bar -->
<div class="a" style="left:0;top:527px;width:1024px;height:19px;background:#f0f0f0;border-bottom:1px solid #fff"></div>
<div class="a" style="left:247px;top:542.5px;width:89px;height:2.5px;background:#d6d6d6;border:0.5px solid #bcbcbc;border-top:none"></div>
<div class="t" style="left:890px;top:534px;font-size:8.8px;letter-spacing:-0.1px;color:#222">default</div>
<div class="t" style="left:856px;top:534px;font-size:8.8px;letter-spacing:-0.1px;color:#222">rite</div>
<div class="a" style="left:886px;top:529px;width:1px;height:16px;background:#dcdcdc"></div>
<div class="a" style="left:978px;top:529px;width:1px;height:16px;background:#dcdcdc"></div>
<div class="a" style="left:994px;top:533px;width:13px;height:8px;background:repeating-linear-gradient(#ec7878 0 1.2px,#f8e6e6 1.2px 2.4px)"></div>
<div class="a" style="left:994px;top:533px;width:6px;height:4.5px;background:#6a84d8"></div>

<!-- console window -->
<div id="con" class="a">
 <svg class="a" style="left:7px;top:6px" width="11" height="9" viewBox="0 0 11 9"><rect x="0.5" y="0.5" width="10" height="8" fill="#f4f4f4" stroke="#b0b0b0" stroke-width="0.6"/><rect x="1.5" y="2" width="4.5" height="5.5" fill="#3c8a78"/><rect x="7" y="2" width="2.6" height="1" fill="#999"/><rect x="7" y="4" width="2.6" height="1" fill="#999"/></svg>
 <div class="t" style="left:23px;top:6.5px;font-size:9.5px;color:#000;letter-spacing:-0.1px;transform-origin:0 50%;transform:scaleX(0.94)">"G:\1103191047&nbsp; Muhammad Muzakki\tugas 2.5.4.exe"</div>
 <div class="a" style="left:644px;top:11px;width:8px;height:1px;background:#111"></div>
 <div class="a" style="left:677px;top:7px;width:8px;height:8.5px;border:1px solid #222"></div>
 <svg class="a" style="left:711px;top:6px" width="10" height="10" viewBox="0 0 10 10" stroke="#111" stroke-width="1"><path d="M0.5 0.5L9.5 9.5M9.5 0.5L0.5 9.5"/></svg>
 <div id="conb" class="a"><div id="cont" class="a">Konversi jam ke menit
Masukkan jam ke menit(jj:mm)=11:07
jam 11:7, adalah setara dengan 667 menit</div></div>
 <div class="a" style="left:721px;top:23px;width:12px;height:235px;background:#f0f0f0"></div>
 <div class="a" style="left:722px;top:36px;width:10px;height:12px;background:#cdcdcd"></div>
 <svg class="a" style="left:723px;top:26px" width="8" height="8" viewBox="0 0 8 8"><path d="M1 5.5L4 2.5L7 5.5" stroke="#444" stroke-width="1.1" fill="none"/></svg>
 <svg class="a" style="left:723px;top:248px" width="8" height="8" viewBox="0 0 8 8"><path d="M1 2.5L4 5.5L7 2.5" stroke="#444" stroke-width="1.1" fill="none"/></svg>
</div>

<!-- taskbar -->
<div id="task" class="a">
 <div class="a" style="left:36px;top:0;width:258px;height:30px;background:#3b3b3b"></div>
 <svg class="a" style="left:12px;top:9px" width="12" height="12" viewBox="0 0 12 12" fill="#fff"><path d="M0 1.7L5.3 1V5.6H0ZM6 0.9L12 0V5.6H6ZM0 6.3H5.3V11L0 10.3ZM6 6.3H12V12L6 11.1Z"/></svg>
 <svg class="a" style="left:44px;top:8px" width="15" height="15" viewBox="0 0 15 15"><circle cx="7.5" cy="7.5" r="5.8" fill="none" stroke="#f0f0f0" stroke-width="1.6"/></svg>
 <div class="t" style="left:66px;top:9.3px;font-size:10.9px;color:#c4c4c4;letter-spacing:-0.05px">Type here to search</div>
 <svg class="a" style="left:273px;top:8px" width="10" height="14" viewBox="0 0 10 14" fill="none" stroke="#d0d0d0" stroke-width="0.9"><rect x="3.2" y="1" width="3.6" height="7.5" rx="1.6"/><path d="M1.2 6.5C1.2 11 8.8 11 8.8 6.5M5 10V12.5M3 12.8H7"/></svg>
 <svg class="a" style="left:303px;top:9px" width="17" height="12" viewBox="0 0 17 12" fill="none" stroke="#f0f0f0" stroke-width="1"><rect x="4" y="1" width="9" height="10"/><path d="M3 2.5H1V9.5H3M14 2.5H16V9.5H14"/></svg>
 <svg class="a" style="left:343px;top:8px" width="14" height="14" viewBox="0 0 14 14"><path d="M0 0H14V8.5L8.5 14H0Z" fill="#f0e49a"/><path d="M14 8.5H8.5V14Z" fill="#857c48"/></svg>
 <svg class="a" style="left:378px;top:7px" width="17" height="16" viewBox="0 0 17 16"><path d="M1.2 7.5C2 3 5.5 1 9 1C13.5 1 16 4.5 16 9V10H6.3C6.5 12.5 9 13.6 11.5 13.6C13 13.6 14.5 13.2 15.5 12.5V15C14 15.7 12.5 16 11 16C6 16 3.2 13 3.2 9.5C3.2 7.5 4.2 5.8 5.8 4.8C3.8 5.2 2.2 6.2 1.2 7.5ZM6.3 7.8H12.3C12.3 5.8 11 4.5 9.3 4.5C7.6 4.5 6.5 5.9 6.3 7.8Z" fill="#1e88e8"/></svg>
 <svg class="a" style="left:414px;top:7px" width="18" height="15" viewBox="0 0 18 15"><path d="M1 1H7L8.5 2.5H17V14H1Z" fill="#f4c84a"/><rect x="1" y="4" width="16" height="10" fill="#fadf7e"/><path d="M5 14V9.5H13V14H11V11.5H7V14Z" fill="#2f9be8"/></svg>
 <svg class="a" style="left:451px;top:5px" width="18" height="19" viewBox="0 0 18 19"><path d="M5.5 6V4C5.5 0.5 12.5 0.5 12.5 4V6" fill="none" stroke="#f4f4f4" stroke-width="1.2"/><path d="M1 5.5H17V17.5H1Z" fill="#f8f8f8"/><rect x="5" y="8" width="3.5" height="3.5" fill="#f25022"/><rect x="9.5" y="8" width="3.5" height="3.5" fill="#7fba00"/><rect x="5" y="12.5" width="3.5" height="3.5" fill="#00a4ef"/><rect x="9.5" y="12.5" width="3.5" height="3.5" fill="#ffb900"/></svg>
 <svg class="a" style="left:487px;top:6px" width="20" height="17" viewBox="0 0 20 17"><path d="M1 7L10 1L19 7V16H1Z" fill="#f8f8f8"/><path d="M2.5 7.5H17L11 12.8L13.5 10.5Z" fill="#111"/><path d="M1.5 7.5L10 7.5L14 12" fill="#111"/></svg>
 <svg class="a" style="left:524px;top:6px" width="20" height="18" viewBox="0 0 20 18"><rect x="4" y="1" width="15.5" height="11.5" fill="#48a8e8"/><circle cx="5" cy="10" r="3.6" fill="#6a94b4" stroke="#aac4d8" stroke-width="1"/><path d="M7.5 12.5L12.5 17" stroke="#9ab0c4" stroke-width="1.8"/></svg>
 <svg class="a" style="left:561px;top:5px" width="19" height="19" viewBox="0 0 19 19"><circle cx="9.5" cy="10" r="8.3" fill="#f07020"/><path d="M9.5 1.7A8.3 8.3 0 0 1 17.8 10A8.3 8.3 0 0 1 12 17.9C15 14 15 7 9.5 1.7Z" fill="#f8c830"/><path d="M2 13C0.5 8 3 3 7 2C5.5 4 6 5.5 7 6.5C5 7.5 5 9 6 10Z" fill="#e83060"/><circle cx="10" cy="10.5" r="4.2" fill="#3a50c8"/><path d="M6 8.5C8 7 10.5 7.5 12 9C10.5 9 9.5 10 9.5 11.5C7.5 11.5 6 10.5 6 8.5Z" fill="#f8a020"/></svg>
 <svg class="a" style="left:597px;top:5px" width="20" height="20" viewBox="0 0 20 20"><circle cx="11.5" cy="7.5" r="6" fill="#3a78d8"/><path d="M8 4C10 2 13 2.5 14 5C12 6 10 6.5 8 4Z" fill="#7ad040"/><path d="M2 12C4 7 9 5 12 7L10 9C7 8 4 9 2 12Z" fill="#e8c020"/><path d="M2 14C5 9.5 9 8.5 12 10L10.5 12C8 11 5 11.5 2 14Z" fill="#e84020"/><path d="M6 13L18 10.5L13 14L14 19L10 15.5L6 16.5L8.5 14Z" fill="#28b828"/></svg>
 <svg class="a" style="left:636px;top:6px" width="17" height="18" viewBox="0 0 16 16"><path d="M1 2.5L7.6 1.2V7.6L1 8.2Z" fill="#d02020"/><path d="M8.4 1.1L15 2.3V8.2L8.4 7.6Z" fill="#48b020"/><path d="M1 9L7.6 8.4V14.8L1 13.6Z" fill="#d8c818"/><path d="M8.4 8.4L15 9V13.6L8.4 14.8Z" fill="#5838c0"/></svg>
 <div class="a" style="left:663px;top:0;width:36px;height:30px;background:#343434"></div>
 <svg class="a" style="left:672px;top:8px" width="16" height="14" viewBox="0 0 16 14"><rect x="0.5" y="0.5" width="15" height="13" fill="#f4f4f4" stroke="#d0d0d0" stroke-width="0.6"/><rect x="2" y="3" width="7" height="9" fill="#3c8a78"/><rect x="2" y="3" width="7" height="4" fill="#5a94b0"/><rect x="10.5" y="3" width="3.5" height="1.2" fill="#aaa"/><rect x="10.5" y="5.5" width="3.5" height="1.2" fill="#aaa"/><rect x="10.5" y="8" width="3.5" height="1.2" fill="#aaa"/></svg>
 <div class="ul" style="left:408px;width:31px"></div><div class="ul" style="left:555px;width:30px"></div><div class="ul" style="left:592px;width:30px"></div><div class="ul" style="left:629px;width:30px"></div><div class="ul" style="left:663px;width:36px"></div>
 <div class="t" style="left:768px;top:10.5px;font-size:8.8px;color:#fff;letter-spacing:-0.05px">Desktop</div>
 <div class="t" style="left:805.5px;top:1.5px;font-size:11px;color:#fff">»</div>
 <svg class="a" style="left:821px;top:11px" width="10" height="7" viewBox="0 0 10 7"><path d="M1 6L5 1.5L9 6" stroke="#f0f0f0" stroke-width="1" fill="none"/></svg>
 <svg class="a" style="left:840px;top:10px" width="10" height="11" viewBox="0 0 11 12" fill="none" stroke="#e8e8e8" stroke-width="1"><path d="M1 11C1 5 5 1.5 10.5 1.5M3.5 11C3.5 7 6.5 4.5 10.5 4.5M6.5 11C6.5 9 8 7.5 10.5 7.5"/><circle cx="9.5" cy="10.5" r="0.8" fill="#e8e8e8"/></svg>
 <svg class="a" style="left:854.5px;top:9px" width="14" height="12" viewBox="0 0 14 12" fill="none" stroke="#e8e8e8" stroke-width="0.9"><path d="M1 4.2H3L6 1.5V10.5L3 7.8H1Z"/><path d="M8 4C9 5.2 9 6.8 8 8M10 2.5C12 4.5 12 7.5 10 9.5"/></svg>
 <svg class="a" style="left:871px;top:9px" width="14" height="12" viewBox="0 0 14 12"><rect x="3.5" y="3.5" width="9.5" height="6" fill="none" stroke="#e8e8e8" stroke-width="1"/><rect x="5" y="5" width="6.5" height="3" fill="#e8e8e8"/><path d="M3.5 5H1.5V1.5M0.5 3H2.5" stroke="#e8e8e8" stroke-width="0.9" fill="none"/></svg>
 <svg class="a" style="left:893px;top:8px" width="13" height="14" viewBox="0 0 13 14" fill="none" stroke="#e8e8e8" stroke-width="1"><path d="M1 12C3 8 6 9 7 6C8 3 10 1 11.5 2C12.5 3 10 6 8 8C6 10 5 12.5 3 12.5C1.5 12.5 1 11 2 10"/></svg>
 <svg class="a" style="left:916px;top:10px" width="17" height="10" viewBox="0 0 17 10"><rect x="0.5" y="0.5" width="16" height="9" rx="1" fill="none" stroke="#e8e8e8" stroke-width="0.9"/><path d="M2.5 3H14.5M2.5 5H14.5" stroke="#e8e8e8" stroke-width="0.9" stroke-dasharray="1.2 0.9"/><path d="M4.5 7.2H12.5" stroke="#e8e8e8" stroke-width="0.9"/></svg>
 <div class="t" style="left:944px;top:4.5px;font-size:8.8px;color:#fff;letter-spacing:-0.15px">9:09 PM</div>
 <div class="t" style="left:940.5px;top:17.5px;font-size:8.8px;color:#fff;letter-spacing:-0.1px">9/19/2019</div>
 <svg class="a" style="left:992.5px;top:8px" width="18" height="18" viewBox="0 0 18 18"><path d="M1 1H12V10H5L2.5 12.5V10H1Z" fill="#f4f4f4"/><path d="M3 3.5H10M3 5.5H10M3 7.5H8" stroke="#111" stroke-width="0.8"/><circle cx="12.3" cy="12.3" r="5.4" fill="#4a4a4a" stroke="#111" stroke-width="0.9"/><text x="10" y="15.3" font-family="Liberation Sans" font-weight="bold" font-size="8.2" fill="#fff">7</text></svg>
 <div class="a" style="left:1019px;top:0;width:1px;height:30px;background:#4a4a4a"></div>
</div>

</body></html>
